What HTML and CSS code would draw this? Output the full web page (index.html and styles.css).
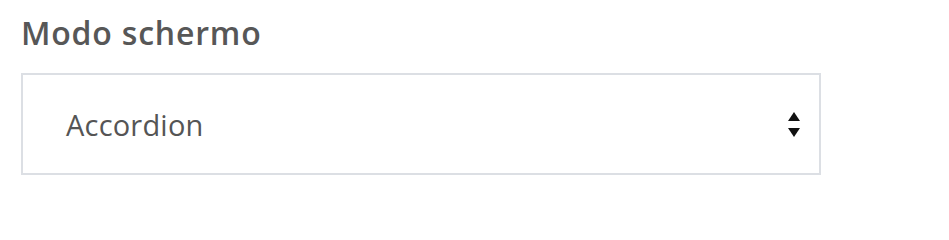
FILE: index.html
```html
<!DOCTYPE html>
<html lang="it">
<head>
<meta charset="utf-8">
<title>Modo schermo</title>
<link rel="stylesheet" href="styles.css">
</head>
<body>
<div class="field">
  <label class="field-label" for="mode">Modo schermo</label>
  <div class="select" id="mode" role="combobox" aria-expanded="false">
    <span class="select-value">Accordion</span>
    <svg class="select-arrows" width="12" height="25" viewBox="0 0 12 25" aria-hidden="true">
      <polygon points="6,0 12,9 0,9" fill="#111"/>
      <polygon points="0,16 12,16 6,25" fill="#111"/>
    </svg>
  </div>
</div>
</body>
</html>
```

FILE: styles.css
```css
html, body {
  margin: 0;
  padding: 0;
  background: #ffffff;
}

body {
  font-family: "Open Sans", "Noto Sans", sans-serif;
  color: #555555;
}

.field {
  display: flex;
  flex-direction: column;
  align-items: flex-start;
  padding: 13px 0 0 21px;
}

.field-label {
  font-size: 32px;
  font-weight: 600;
  line-height: 40px;
  letter-spacing: 0.8px;
  color: #575757;
  margin-bottom: 20px;
}

.select {
  box-sizing: border-box;
  width: 800px;
  height: 102px;
  border: 2px solid #dcdfe4;
  display: flex;
  align-items: center;
  justify-content: space-between;
  padding: 0 19px 0 43px;
}

.select-value {
  font-size: 29px;
  font-weight: 400;
  line-height: 1;
  letter-spacing: 0.2px;
}

.select-arrows {
  display: block;
}
```
